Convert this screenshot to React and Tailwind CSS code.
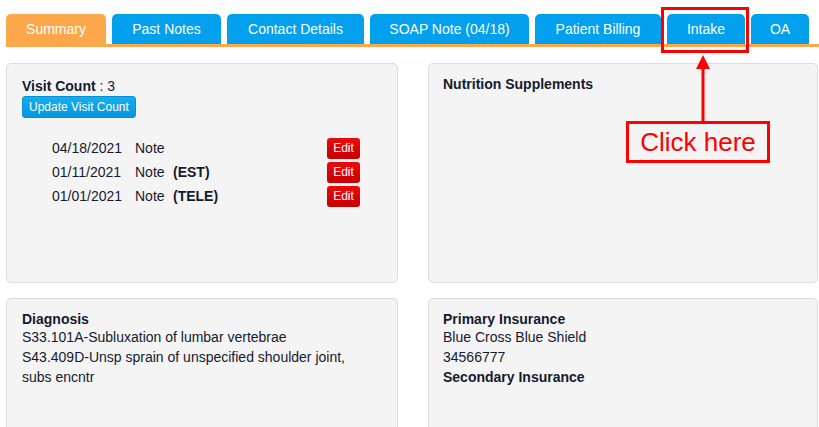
import React from 'react'

const tabs = [
    { label: 'Summary', w: 'w-[100px]', active: true },
    { label: 'Past Notes', w: 'w-[109px]' },
    { label: 'Contact Details', w: 'w-[137px]' },
    { label: 'SOAP Note (04/18)', w: 'w-[159px]' },
    { label: 'Patient Billing', w: 'w-[126px]' },
    { label: 'Intake', w: 'w-[78px]' },
    { label: 'OA', w: 'w-[58px]' },
]

const visits = [
    { date: '04/18/2021', tag: '' },
    { date: '01/11/2021', tag: '(EST)' },
    { date: '01/01/2021', tag: '(TELE)' },
]

const Card = ({ className = '', children }) => (
    <div className={`bg-[#f4f4f4] border border-[#dcdcdc] rounded-[5px] ${className}`}>
        {children}
    </div>
)

const App = () => {
    return (
        <div className="relative w-[819px] h-[427px] overflow-hidden bg-white text-[14px] text-[#141a30]" style={{ fontFamily: '"Liberation Sans", Arial, sans-serif' }}>
            {/* Tabs */}
            <div className="pl-[6px] pt-[14px]">
                <div className="flex gap-[6px]">
                    {tabs.map(tab => (
                        <div
                            key={tab.label}
                            className={`${tab.w} h-[30px] rounded-t-[5px] flex items-center justify-center text-white text-[14px] ${tab.active ? 'bg-[#fca84a]' : 'bg-[#03a0ee]'}`}
                        >
                            {tab.label}
                        </div>
                    ))}
                </div>
                <div className="h-[3px] bg-[#fca84a]"></div>
            </div>

            {/* Cards */}
            <div className="grid grid-cols-[392px_390px] gap-x-[30px] gap-y-[15px] pl-[6px] mt-[16px]">
                <Card className="h-[220px] pl-[15px] pt-[14px]">
                    <div className="leading-[16px]"><span className="font-bold">Visit Count</span> : 3</div>
                    <button className="mt-[2px] h-[22px] px-[6px] rounded-[3px] text-white text-[12px] bg-gradient-to-b from-[#14aef2] to-[#0696dc] border border-[#0a8fd0]">
                        Update Visit Count
                    </button>
                    <div className="mt-[19px] pl-[30px] pr-[37px] flex flex-col gap-[2px]">
                        {visits.map(v => (
                            <div key={v.date} className="flex items-center h-[22px]">
                                <span className="w-[83px]">{v.date}</span>
                                <span className="w-[38px]">Note</span>
                                <span className="font-bold flex-1">{v.tag}</span>
                                <button className="h-[21px] w-[33px] rounded-[3px] text-white text-[12px] bg-gradient-to-b from-[#ee0a0a] to-[#c40000]">
                                    Edit
                                </button>
                            </div>
                        ))}
                    </div>
                </Card>
                <Card className="h-[220px] pl-[14px] pt-[12px]">
                    <div className="font-bold leading-[16px]">Nutrition Supplements</div>
                </Card>
                <Card className="h-[160px] pl-[15px] pt-[12px] leading-[20px]">
                    <div className="font-bold leading-[16px]">Diagnosis</div>
                    <div>S33.101A-Subluxation of lumbar vertebrae</div>
                    <div>S43.409D-Unsp sprain of unspecified shoulder joint,</div>
                    <div>subs encntr</div>
                </Card>
                <Card className="h-[160px] pl-[14px] pt-[12px] leading-[20px]">
                    <div className="font-bold leading-[16px]">Primary Insurance</div>
                    <div>Blue Cross Blue Shield</div>
                    <div>34566777</div>
                    <div className="font-bold">Secondary Insurance</div>
                </Card>
            </div>

            {/* Annotation */}
            <div className="absolute left-[661px] top-[7px] w-[88px] h-[46px] border-[3px] border-[#ff0000]"></div>
            <svg className="absolute left-[693px] top-[54px]" width="20" height="68" viewBox="0 0 20 68">
                <polygon points="10,1 17,15 3,15" fill="#ff0000" />
                <rect x="8.5" y="14" width="3" height="54" fill="#ff0000" />
            </svg>
            <div className="absolute left-[626px] top-[121px] w-[144px] h-[42px] border-[3px] border-[#ff0000] flex items-center justify-center text-[#ff0000] text-[26px] leading-none">
                Click here
            </div>
        </div>
    )
}

export default App
